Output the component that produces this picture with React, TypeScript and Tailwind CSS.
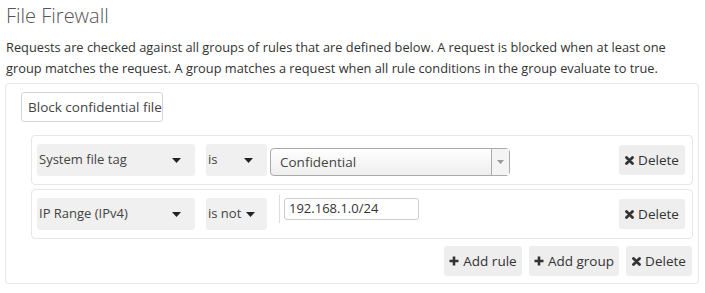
import type { ReactNode } from 'react';

const font = { fontFamily: '"Open Sans", "Liberation Sans", sans-serif' };

function Caret() {
  return (
    <svg width="9" height="5" viewBox="0 0 9 5" className="shrink-0">
      <path d="M0 0h9L4.5 5z" fill="#222" />
    </svg>
  );
}

function XIcon() {
  return (
    <svg width="9" height="9" viewBox="0 0 9 9" className="shrink-0">
      <path d="M1.5 1.5l6 6M7.5 1.5l-6 6" stroke="#333" strokeWidth="2.8" strokeLinecap="round" />
    </svg>
  );
}

function PlusIcon() {
  return (
    <svg width="10" height="10" viewBox="0 0 10 10" className="shrink-0">
      <path d="M5 0.5v9M0.5 5h9" stroke="#333" strokeWidth="2.6" />
    </svg>
  );
}

function Btn({ icon, label, w }: { icon: ReactNode; label: string; w: string }) {
  return (
    <button className={`${w} flex h-[30px] items-center justify-center gap-[4px] rounded-[3px] bg-[#eeeeee] text-[13.5px] text-[#333]`}>
      {icon}
      <span>{label}</span>
    </button>
  );
}

function Select({ label, w, tight }: { label: string; w: string; tight?: boolean }) {
  return (
    <div className={`${w} flex h-[32px] items-center whitespace-nowrap rounded-[3px] bg-[#f0f0f0] pl-[2px] pr-[14px] text-[13px] text-[#444] ${tight ? 'gap-[5px]' : 'justify-between'}`}>
      <span>{label}</span>
      <Caret />
    </div>
  );
}

function Row({ children }: { children: ReactNode }) {
  return (
    <div className="flex h-[50px] items-center rounded-[4px] border border-[#e6e6e6] pl-[5px] pr-[7px]">
      {children}
      <div className="ml-auto">
        <Btn icon={<XIcon />} label="Delete" w="w-[66px]" />
      </div>
    </div>
  );
}

export default function App() {
  return (
    <div style={font} className="h-[293px] w-[705px] bg-white px-[5px] pt-[2px] text-[#333]">
      <h2 className="ml-[1px] text-[20px] font-light leading-[28px] text-[#555]">File Firewall</h2>
      <p className="ml-[1px] mt-[7px] text-[12.8px] leading-[21px]">
        Requests are checked against all groups of rules that are defined below. A request is blocked when at least one
        group matches the request. A group matches a request when all rule conditions in the group evaluate to true.
      </p>
      <div className="mt-[4px] w-[694px] rounded-[4px] border border-[#e8e8e8] pb-[7px] pt-[8px]">
        <div className="pl-[15px]">
          <input
            readOnly
            value="Block confidential files"
            style={font}
            className="h-[30px] w-[142px] rounded-[3px] border border-[#d4d4d4] pl-[6px] text-[13.5px] text-[#444] outline-none"
          />
        </div>
        <div className="ml-[25px] mr-[5px] mt-[13px] flex flex-col gap-[4px]">
          <Row>
            <Select label="System file tag" w="w-[158px]" />
            <div className="w-[11px]" />
            <Select label="is" w="w-[61px]" />
            <div className="ml-[3px] mt-[4px] flex h-[28px] w-[240px] items-center rounded-[4px] border border-[#aaa] bg-gradient-to-b from-white to-[#eeeeee] text-[13.5px] text-[#444]">
              <span className="flex-1 pl-[9px]">Confidential</span>
              <div className="flex h-full w-[18px] items-center justify-center border-l border-[#aaa] bg-[#f4f4f4]">
                <svg width="7" height="4" viewBox="0 0 7 4">
                  <path d="M0 0h7L3.5 4z" fill="#999" />
                </svg>
              </div>
            </div>
          </Row>
          <Row>
            <Select label="IP Range (IPv4)" w="w-[158px]" />
            <div className="w-[11px]" />
            <Select label="is not" w="w-[61px]" tight />
            <div className="ml-[12px] flex h-[40px] items-start self-start pt-[5px]">
              <div className="h-[28px] w-px bg-[#ddd]" />
              <div className="ml-[4px] mt-[3px] flex h-[22px] w-[135px] items-center rounded-[3px] border border-[#ccc] pl-[4px] text-[13px] text-[#333]">
                192.168.1.0/24
              </div>
            </div>
          </Row>
        </div>
        <div className="mr-[6px] mt-[7px] flex justify-end gap-[7px]">
          <Btn icon={<PlusIcon />} label="Add rule" w="w-[78px]" />
          <Btn icon={<PlusIcon />} label="Add group" w="w-[90px]" />
          <Btn icon={<XIcon />} label="Delete" w="w-[66px]" />
        </div>
      </div>
    </div>
  );
}
